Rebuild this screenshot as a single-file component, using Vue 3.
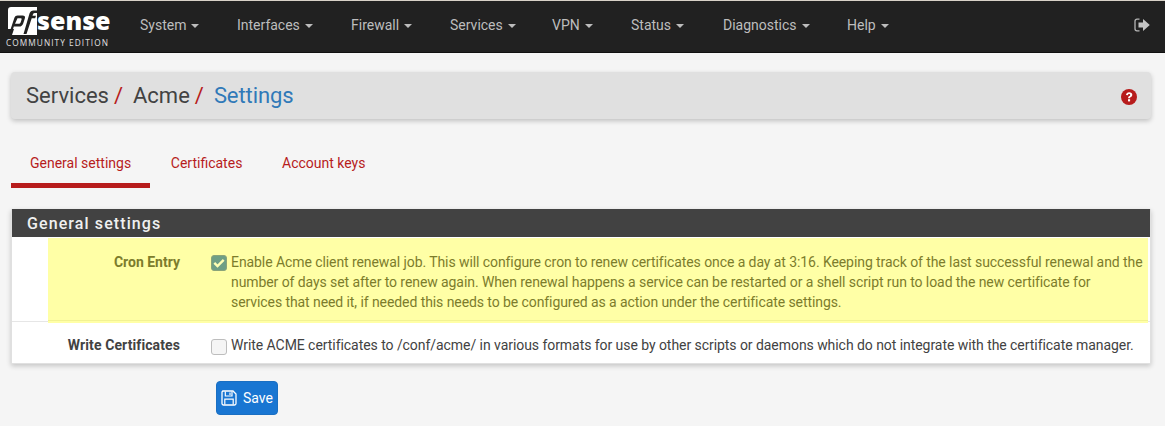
<script setup>
const nav = [
  { label: 'System', w: 97 },
  { label: 'Interfaces', w: 114 },
  { label: 'Firewall', w: 99 },
  { label: 'Services', w: 102 },
  { label: 'VPN', w: 79 },
  { label: 'Status', w: 92 },
  { label: 'Diagnostics', w: 124 },
  { label: 'Help', w: 80 },
]
const tabs = ['General settings', 'Certificates', 'Account keys']
</script>

<template>
  <div class="page">
    <header class="topbar">
      <div class="brand">
        <div class="logo-row">
          <svg class="pf" width="29" height="28" viewBox="0 0 29 28">
            <path d="M3 0H29V28H4L6 22H0V3A3 3 0 0 1 3 0Z" fill="#fff" />
            <path fill-rule="evenodd" fill="#212121" d="M1 27 L6.500 10.500 Q7.200 8.500 9.500 8.500 H14.500 Q17.800 8.500 16.800 11.600 L15.200 16.400 Q14.200 19.500 11 19.500 H5.800 L3.500 27Z M9.500 11.200 L7 16.800 H11 Q12.200 16.800 12.600 15.600 L13.600 12.600 Q13.900 11.200 12.800 11.200Z" />
            <path fill="#212121" d="M15.500 27 L21.500 6.500 Q22.500 3.500 25.500 3.500 H29 V6 H26.800 Q25.500 6 25 7.200 L24.500 8.800 H28 L27.200 11.200 H23.700 L18.500 27Z" />
          </svg>
          <span class="sense">sense</span>
        </div>
        <div class="edition">COMMUNITY EDITION</div>
      </div>
      <nav class="menu">
        <a v-for="n in nav" :key="n.label" class="menu-item" :style="{ width: n.w + 'px' }">
          {{ n.label }}<i class="caret"></i>
        </a>
      </nav>
      <svg class="logout" width="16" height="14" viewBox="0 0 16 14">
        <path d="M5.500 1.200H3A2 2 0 0 0 1 3.200V10.800A2 2 0 0 0 3 12.800H5.500" fill="none" stroke="#b5b5b5" stroke-width="1.300" />
        <path d="M4.500 4.500H9V1L15.800 7L9 13V9.500H4.500Z" fill="#c4c4c4" />
      </svg>
    </header>

    <main class="content">
      <div class="crumbs">
        <h1 class="crumb-title">
          <span>Services</span><em>/</em><span>Acme</span><em>/</em><span class="current">Settings</span>
        </h1>
        <svg class="help" width="16" height="16" viewBox="0 0 16 16">
          <circle cx="8" cy="8" r="8" fill="#b71c1c" />
          <path d="M5 6.100C5.100 4.300 6.400 3.200 8.200 3.200C10 3.200 11.300 4.200 11.300 5.800C11.300 7 10.600 7.600 9.800 8.100C9.200 8.500 9.100 8.700 9.100 9.300H7.100C7.100 8.200 7.400 7.600 8.200 7.100C8.900 6.700 9.200 6.400 9.200 5.900C9.200 5.400 8.800 5 8.100 5C7.400 5 7 5.500 6.900 6.300Z" fill="#fff" />
          <rect x="7" y="10.200" width="2.100" height="2.200" fill="#fff" />
        </svg>
      </div>

      <ul class="tabs">
        <li v-for="(t, i) in tabs" :key="t" class="tab" :class="{ active: i === 0 }">{{ t }}</li>
      </ul>

      <section class="panel">
        <h2 class="panel-head">General settings</h2>
        <div class="row row-first">
          <div class="highlight">
            <label class="row-label">Cron Entry</label>
            <div class="row-body">
              <span class="check checked">
                <svg width="12" height="10" viewBox="0 0 12 10"><path d="M1.300 4.800L4.500 8L10.700 1.800" fill="none" stroke="#ffffb4" stroke-width="2.400" /></svg>
              </span>
              <p>Enable Acme client renewal job. This will configure cron to renew certificates once a day at 3:16. Keeping track of the last successful renewal and the number of days set after to renew again. When renewal happens a service can be restarted or a shell script run to load the new certificate for<br>services that need it, if needed this needs to be configured as a action under the certificate settings.</p>
            </div>
          </div>
        </div>
        <div class="row row-last">
          <label class="row-label">Write Certificates</label>
          <div class="row-body">
            <span class="check"></span>
            <p>Write ACME certificates to /conf/acme/ in various formats for use by other scripts or daemons which do not integrate with the certificate manager.</p>
          </div>
        </div>
      </section>

      <button class="save" type="button">
        <svg width="16" height="16" viewBox="0 0 16 16">
          <path d="M1.800 1H12L15 4V13.500A1.500 1.500 0 0 1 13.500 15H2.500A1.500 1.500 0 0 1 1 13.500V2Z" fill="none" stroke="#fff" stroke-width="1.300" />
          <path d="M4.300 1.500V6H11V1.500M9 2.500V5" fill="none" stroke="#fff" stroke-width="1.200" />
          <path d="M3.800 14.500V9.200H12.200V14.500" fill="none" stroke="#fff" stroke-width="1.200" />
        </svg>
        Save
      </button>
    </main>
  </div>
</template>

<style>
html, body { margin: 0; background: #f5f5f5; }
</style>

<style scoped>
.page {
  width: 1165px;
  height: 426px;
  overflow: hidden;
  background: #f5f5f5;
  font-family: Roboto, sans-serif;
  font-size: 14px;
  color: #424242;
}
.topbar {
  display: flex;
  align-items: center;
  height: 51px;
  background: #212121;
  border-top: 1px solid #d8d2c8;
  box-shadow: 0 1px 0 #111;
}
.brand {
  flex: none;
  align-self: flex-start;
  width: 121px;
  padding: 6px 0 0 6px;
  box-sizing: border-box;
}
.logo-row { display: flex; align-items: flex-end; padding-left: 2px; height: 28px; }
.pf { flex: none; }
.sense {
  font-family: "Open Sans", sans-serif;
  font-weight: 800;
  font-size: 25px;
  line-height: 27px;
  color: #fff;
  margin: 0 0 1px 0;
}
.edition {
  margin-top: 2px;
  font-family: "Open Sans", sans-serif;
  font-size: 8.300px;
  line-height: 11px;
  letter-spacing: 1.050px;
  color: #e0e0e0;
  white-space: nowrap;
}
.menu { display: flex; flex: 1; padding-bottom: 3px; }
.menu-item {
  display: block;
  box-sizing: border-box;
  color: #bdbdbd;
  white-space: nowrap;
  padding-left: 19px;
  line-height: 20px;
}
.caret {
  display: inline-block;
  margin-left: 5px;
  vertical-align: middle;
  border-top: 4px solid #bdbdbd;
  border-left: 4px solid transparent;
  border-right: 4px solid transparent;
}
.logout { margin: 0 15px 3px 0; flex: none; }

.content { padding: 20px 14px 0 11px; }
.crumbs {
  display: flex;
  align-items: center;
  justify-content: space-between;
  height: 47px;
  padding: 0 14px 0 15px;
  border-radius: 4px;
  background: #e0e0e0;
  box-shadow: 0 2px 5px rgba(0,0,0,.22);
}
.crumb-title {
  margin: 0;
  padding-top: 1px;
  font-size: 22px;
  font-weight: 400;
  line-height: 24px;
  color: #424242;
  white-space: nowrap;
}
.crumb-title em { font-style: normal; color: #b71c1c; margin: 0 10px 0 5px; }
.crumb-title .current { color: #3079b8; letter-spacing: -0.100px; }
.help { flex: none; margin-top: 2px; }

.tabs {
  display: flex;
  gap: 1.700px;
  list-style: none;
  margin: 20px 0 0 0;
  padding: 0;
}
.tab {
  color: #b71c1c;
  padding: 15px 19px;
  line-height: 18px;
  height: 49px;
  box-sizing: border-box;
  border-bottom: 5px solid transparent;
}
.tab.active { border-bottom-color: #b71c1c; }

.panel {
  margin: 21px 0 0 0;
  width: 1138px;
  background: #fff;
  border: 1px solid #e0e0e0;
  border-top: 0;
  box-shadow: 0 2px 5px rgba(0,0,0,.2);
}
.panel-head {
  margin: 0;
  height: 28px;
  line-height: 29px;
  padding-left: 15px;
  background: #424242;
  color: #f0f0f0;
  font-size: 16px;
  font-weight: 500;
  letter-spacing: 1.100px;
}
.row { position: relative; }
.row-first {
  padding-left: 36px;
  height: 83px;
  border-bottom: 1px solid #e6e6e6;
}
.highlight {
  display: flex;
  position: relative;
  width: 1100px;
  height: 85px;
  margin-top: 1px;
  background: #ffffa6;
  color: #7c7c2c;
}
.highlight::after {
  content: "";
  position: absolute;
  left: 0;
  right: 0;
  bottom: 2px;
  height: 1px;
  background: #f2f292;
}
.row-label {
  flex: none;
  font-weight: 700;
  text-align: right;
  line-height: 20px;
  white-space: nowrap;
}
.highlight .row-label { width: 132px; padding-top: 14px; }
.row-last .row-label { width: 168px; letter-spacing: 0.100px; }
.row-body { display: flex; margin-left: 31px; }
.row-body p { margin: 0; line-height: 20px; font-size: 14px; letter-spacing: -0.055px; }
.highlight .row-body { padding-top: 14px; width: 937px; }
.highlight .row-body p { letter-spacing: -0.080px; }
.row-last { display: flex; padding-top: 13px; height: 41px; box-sizing: border-box; }
.row-last .check { margin-top: 4px; }
.check {
  flex: none;
  display: flex;
  align-items: center;
  justify-content: center;
  box-sizing: border-box;
  width: 16px;
  height: 16px;
  margin: 3px 4px 0 0;
  border-radius: 3px;
  background: #f5f5f5;
  border: 1px solid #bdbdbd;
}
.check.checked { background: #6f9f85; border-color: #8aa47a; }
.save {
  display: flex;
  align-items: center;
  gap: 6px;
  margin: 17px 0 0 205px;
  width: 62px;
  height: 34px;
  padding: 0 0 0 4px;
  box-sizing: border-box;
  background: #1976d2;
  color: #fff;
  border: 1px solid #1a6fc2;
  border-radius: 4px;
  font-family: Roboto, sans-serif;
  font-size: 14px;
}
</style>
